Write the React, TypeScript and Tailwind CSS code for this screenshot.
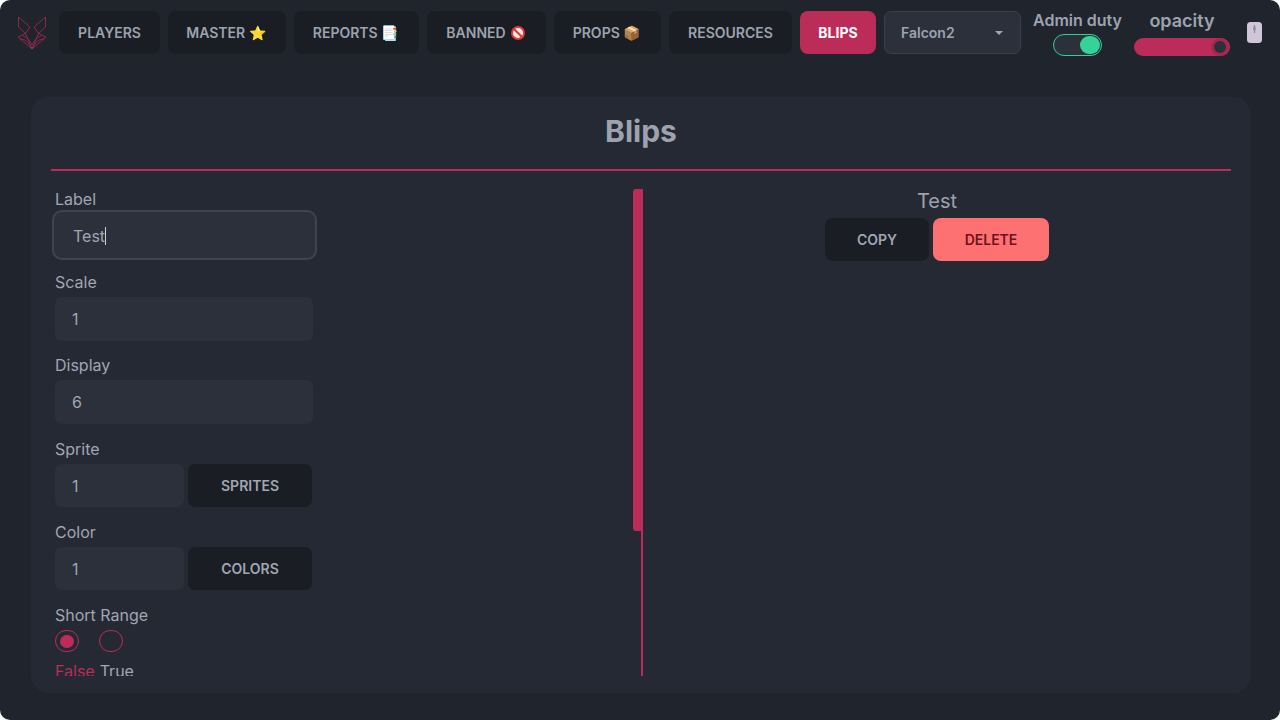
import React from 'react';

function BannedIcon() {
  return (
    <svg viewBox="0 0 14 14" className="ml-[5px] inline-block h-[14px] w-[14px] align-[-2px]">
      <circle cx="7" cy="7" r="6" fill="#fbeaea" stroke="#de3a3a" strokeWidth="2" />
      <path d="M3 3 L11 11" stroke="#de3a3a" strokeWidth="2.2" />
    </svg>
  );
}

const navItems = [
  { label: 'PLAYERS', width: 'w-[101px]' },
  { label: 'MASTER ⭐', width: 'w-[118px] pr-[2px]' },
  { label: 'REPORTS 📑', width: 'w-[125px] pr-[2px]' },
  { label: 'BANNED', width: 'w-[119px] pr-[2px]', icon: <BannedIcon /> },
  { label: 'PROPS 📦', width: 'w-[107px] pr-[2px]' },
  { label: 'RESOURCES', width: 'w-[123px]' },
];

function FoxLogo() {
  return (
    <svg viewBox="0 0 30 34" className="h-[34px] w-[30px] shrink-0" fill="none" stroke="#a82a52" strokeWidth="0.8">
      <path d="M1.5 1 L13 11 L8.5 17.5 L1.5 11 Z" />
      <path d="M28.5 1 L17 11 L21.5 17.5 L28.5 11 Z" />
      <path d="M1 21 L8.5 17.5 L15 33 L21.5 17.5 L29 21 L15 33 Z" />
      <path d="M3 23 C8 23 12 26 15 33 C18 26 22 23 27 23" />
      <path d="M6 20 C10 21 13 25 15 29 C17 25 20 21 24 20" />
    </svg>
  );
}

function NavButton({ label, width, icon }: { label: string; width: string; icon?: React.ReactNode }) {
  return (
    <button className={`${width} h-[43px] shrink-0 rounded-lg bg-[#1a1d24] text-sm font-semibold text-[#9ca3af]`}>
      {label}
      {icon}
    </button>
  );
}

function Input({ value, className }: { value: string; className: string }) {
  return (
    <input
      readOnly
      value={value}
      className={`${className} rounded-[7px] bg-[#2b303b] px-[17px] text-base text-[#a0a6b3] outline-none`}
    />
  );
}

function SideButton({ label }: { label: string }) {
  return (
    <button className="h-[43px] w-[124px] rounded-[7px] bg-[#1a1d24] text-sm font-semibold text-[#a0a6b3]">{label}</button>
  );
}

function FieldLabel({ text, className }: { text: string; className?: string }) {
  return <label className={`${className ?? ''} block text-base leading-[22px] text-[#a0a6b3]`}>{text}</label>;
}

export default function App() {
  return (
    <div className="h-[720px] w-[1280px] overflow-hidden bg-white font-['Inter',sans-serif]">
      <div className="flex h-full flex-col rounded-[10px] bg-[#20242d]">
        {/* Header */}
        <header className="flex h-[65px] items-center pl-[17px]">
          <FoxLogo />
          <nav className="ml-[12px] flex gap-2">
            {navItems.map((item) => (
              <NavButton key={item.label} {...item} />
            ))}
            <button className="h-[43px] w-[76px] rounded-lg bg-[#bb2c58] text-sm font-bold text-white">BLIPS</button>
            <div className="flex h-[43px] w-[137px] items-center justify-between rounded-[7px] border border-[#3a3f4b] bg-[#2b303b] pl-4 pr-[17px] text-sm font-semibold text-[#9ca3af]">
              Falcon2
              <span className="h-0 w-0 border-x-[4px] border-t-[4px] border-x-transparent border-t-[#a0a6b3]" />
            </div>
          </nav>
          <div className="ml-[11px] mt-[2px] flex w-[91px] flex-col items-center">
            <span className="text-base font-semibold leading-[18px] text-[#9ca3af]">Admin duty</span>
            <div className="mt-[5px] flex h-[22px] w-[49px] items-center justify-end rounded-full border border-[#2fd296] bg-[#2b303b] pr-px">
              <span className="h-[18px] w-[20px] rounded-full bg-[#34d399]" />
            </div>
          </div>
          <div className="ml-[11px] mt-[2px] flex w-[96px] flex-col items-center">
            <span className="text-lg font-semibold leading-[20px] text-[#9ca3af]">opacity</span>
            <div className="mt-[7px] flex h-[18px] w-[96px] items-center justify-end rounded-full bg-[#bb2c58] pr-px">
              <span className="h-[18px] w-[18px] rounded-full border-[3px] border-[#a3284f] bg-[#2b303b]" />
            </div>
          </div>
          <svg viewBox="0 0 15 21" className="ml-[17px] h-[21px] w-[15px]">
            <rect width="15" height="21" rx="3.5" fill="#cfc6da" />
            <path d="M7.5 3 L7.5 11" stroke="#9389a6" strokeWidth="1.2" />
            <rect x="6.3" y="4.5" width="2.4" height="4" rx="1.2" fill="#9389a6" />
          </svg>
        </header>

        {/* Panel */}
        <main className="mx-[31px] mt-[32px] flex h-[596px] w-[1220px] flex-col rounded-[18px] bg-[#252934] px-5">
          <h1 className="mt-[16px] text-center text-[30px] font-bold leading-[36px] text-[#9ca3af]">Blips</h1>
          <div className="mt-[20px] h-[2px] bg-[#bb2c58]" />
          <div className="mt-[18px] flex h-[487px]">
            <section className="relative h-full w-[592px] shrink-0 border-r-2 border-[#bb2c58]">
              <div className="absolute right-[-2px] top-0 h-[342px] w-[10px] rounded-[3px] bg-[#bb2c58]" />
              <div className="h-full overflow-hidden pl-[4px]">
                <div className="w-[258px]">
                  <FieldLabel text="Label" className="-mt-px" />
                  <div className="-ml-[3px] flex h-[50px] w-[265px] items-center rounded-[10px] border-2 border-[#3f4452] bg-[#2b303b] pl-[19px] pt-px text-base text-[#a0a6b3]">
                    Test
                    <span className="h-[18px] w-px bg-[#c9ced8]" />
                  </div>
                  <FieldLabel text="Scale" className="mt-[11px]" />
                  <Input value="1" className="mt-[4px] h-[44px] w-[258px]" />
                  <FieldLabel text="Display" className="mt-[13px]" />
                  <Input value="6" className="mt-[4px] h-[44px] w-[258px]" />
                  <FieldLabel text="Sprite" className="mt-[14px]" />
                  <div className="mt-[4px] flex h-[43px] w-[257px] justify-between">
                    <Input value="1" className="h-[43px] w-[129px]" />
                    <SideButton label="SPRITES" />
                  </div>
                  <FieldLabel text="Color" className="mt-[14px]" />
                  <div className="mt-[4px] flex h-[43px] w-[257px] justify-between">
                    <Input value="1" className="h-[43px] w-[129px]" />
                    <SideButton label="COLORS" />
                  </div>
                  <FieldLabel text="Short Range" className="mt-[14px]" />
                  <div className="mt-[4px] flex gap-[20px]">
                    <span className="flex h-[22px] w-[24px] items-center justify-center rounded-full border border-[#bb2c58]">
                      <span className="h-[13px] w-[14px] rounded-full bg-[#bb2c58]" />
                    </span>
                    <span className="h-[22px] w-[24px] rounded-full border border-[#bb2c58]" />
                  </div>
                  <div className="mt-[8px] flex gap-[5px] text-base leading-[22px]">
                    <span className="text-[#bb2c58]">False</span>
                    <span className="text-[#a0a6b3]">True</span>
                  </div>
                </div>
              </div>
            </section>
            <section className="flex flex-1 flex-col items-center">
              <p className="-mt-px text-xl leading-[26px] text-[#9ca3af]">Test</p>
              <div className="mt-[4px] flex gap-1">
                <button className="h-[43px] w-[104px] rounded-lg bg-[#1a1d24] text-sm font-semibold text-[#a0a6b3]">COPY</button>
                <button className="h-[43px] w-[116px] rounded-lg bg-[#fd7172] text-sm font-semibold text-[#6b1420]">DELETE</button>
              </div>
            </section>
          </div>
        </main>
      </div>
    </div>
  );
}
